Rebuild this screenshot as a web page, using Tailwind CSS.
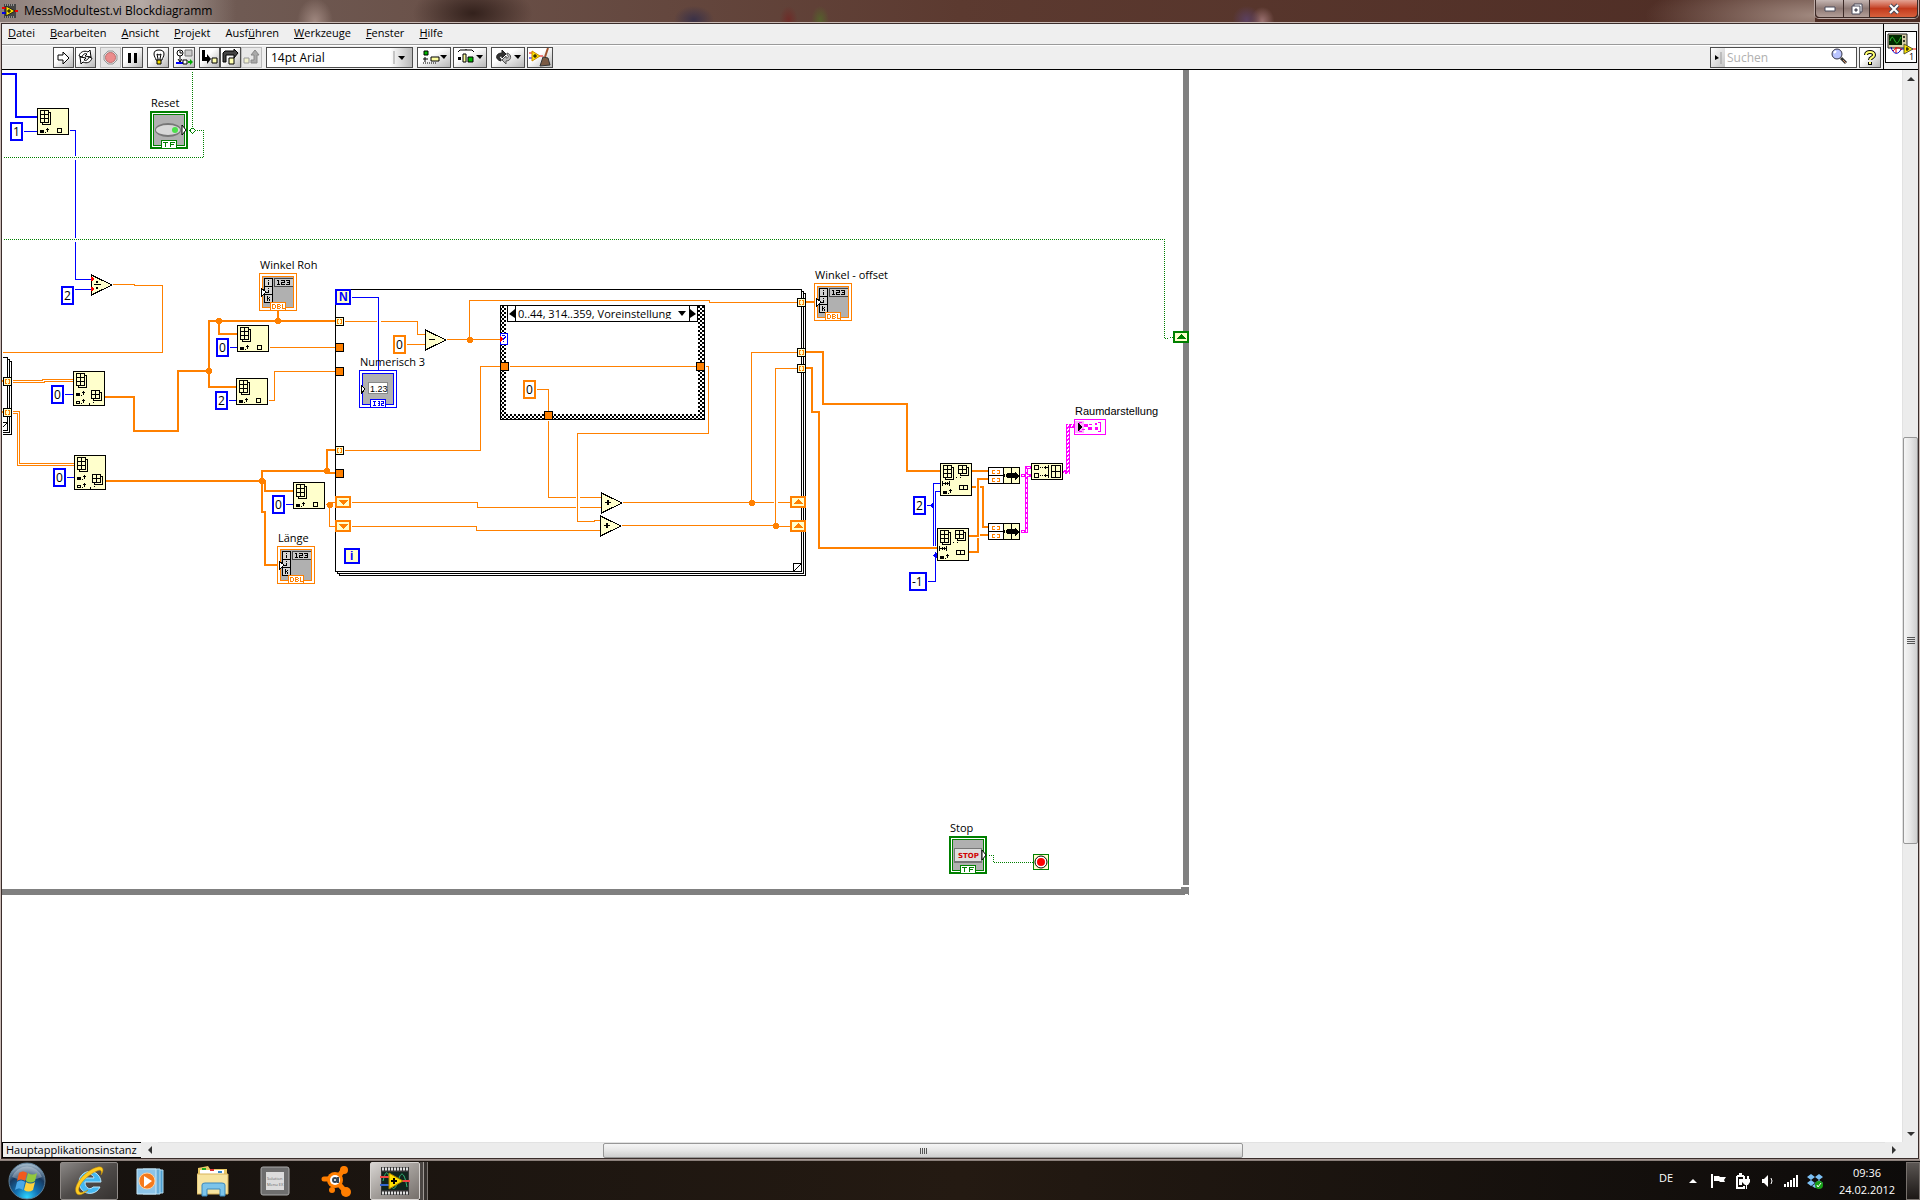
<!DOCTYPE html>
<html lang="de">
<head>
  <meta charset="UTF-8">
  <meta name="viewport" content="width=device-width, initial-scale=1.0">
  <title>MessModultest.vi Blockdiagramm</title>
  <script src="https://cdn.jsdelivr.net/npm/@tailwindcss/browser@4"></script>
</head>
<body class="h-screen flex flex-col overflow-hidden bg-black text-black text-[11px] font-['Open_Sans','Noto_Sans',sans-serif]">

  <!-- Fenster -->
  <div class="flex-1 min-h-0 flex flex-col bg-[#c9bab5]">
    <header class="h-[22px] shrink-0 flex items-start justify-between bg-linear-to-r from-[#75655f] via-[#5c3a30] to-[#4c2b23]">
      <div class="h-full flex items-center gap-1.5 pl-0.5 pr-6 bg-linear-to-r from-[#8d7f7a] via-[#b5aaa5] via-60% to-[#b5aaa5]/0">
        <svg class="w-4 h-4" viewBox="0 0 16 16">
          <path d="M2 1h12v14H2z" fill="#444"/>
          <path d="M3 2h10M3 14h10" stroke="#ddd" stroke-dasharray="1 1"/>
          <path d="M0 5h4" stroke="#e00" stroke-width="2"/><path d="M0 10h4" stroke="#00e" stroke-width="2"/><path d="M12 8h4" stroke="#e00" stroke-width="2"/>
          <path d="M4 3l9 5-9 5z" fill="#ffe600" stroke="#222"/>
          <path d="M5 8h4M7 6v4" stroke="#000"/>
        </svg>
        <h1 class="text-xs">MessModultest.vi Blockdiagramm</h1>
      </div>
      <div class="self-stretch flex-1 bg-[radial-gradient(ellipse_18px_24px_at_5%_100%,#a08880,transparent),radial-gradient(ellipse_60px_30px_at_15%_60%,#33211c,transparent),radial-gradient(ellipse_20px_14px_at_29%_90%,#3a3148,transparent),radial-gradient(ellipse_9px_14px_at_35%_90%,#6e2c28,transparent),radial-gradient(ellipse_9px_14px_at_37%_90%,#55602c,transparent),radial-gradient(ellipse_14px_14px_at_64%_90%,#5b4060,transparent),radial-gradient(ellipse_12px_14px_at_65%_95%,#9a7070,transparent),radial-gradient(ellipse_170px_40px_at_100%_70%,#a1897f,transparent)]"></div>
      <div class="h-[18px] mr-0.5 flex rounded-b border border-t-0 border-[#3c2a27] shadow-[0_0_0_1px_#bca9a4]">
        <button aria-label="Minimieren" class="w-[28px] flex items-center justify-center bg-linear-to-b from-[#c5b6b2] via-[#8e7974] via-50% to-[#b39f99] border-r border-[#3c2a27] rounded-bl">
          <svg class="w-3 h-3" viewBox="0 0 12 12"><path d="M1 4h10v4H1z" fill="#fff" stroke="#4a4a5a"/></svg>
        </button>
        <button aria-label="Verkleinern" class="w-[26px] flex items-center justify-center bg-linear-to-b from-[#c5b6b2] via-[#8e7974] via-50% to-[#b39f99] border-r border-[#3c2a27]">
          <svg class="w-3 h-3" viewBox="0 0 12 12"><path d="M3 1h8v8H3z" fill="#fff" stroke="#4a4a5a"/><path d="M1 3h8v8H1z" fill="#fff" stroke="#4a4a5a"/><path d="M4 6h2v2H4z" fill="#777" stroke="#4a4a5a"/></svg>
        </button>
        <button aria-label="Schließen" class="w-[47px] flex items-center justify-center bg-linear-to-b from-[#e3a394] via-[#c23a1c] via-50% to-[#d8603c] rounded-br">
          <svg class="w-3 h-3" viewBox="0 0 12 12"><path d="M2 2l8 8M10 2l-8 8" stroke="#4a4a5a" stroke-width="4"/><path d="M2 2l8 8M10 2l-8 8" stroke="#fff" stroke-width="2"/></svg>
        </button>
      </div>
    </header>

    <div class="flex-1 min-h-0 mx-px mt-px flex flex-col border border-[#3a2d2b] bg-[#efefef]">
      <div class="shrink-0 flex border-b border-black">
        <div class="flex-1 min-w-0">
          <nav class="h-[21px] flex items-center pl-1.5 pb-0.5 border-b border-[#9a9a9a]">
            <ul class="flex gap-[15px]">
              <li><a href="#"><u>D</u>atei</a></li>
              <li><a href="#"><u>B</u>earbeiten</a></li>
              <li><a href="#"><u>A</u>nsicht</a></li>
              <li><a href="#"><u>P</u>rojekt</a></li>
              <li><a href="#">Ausf<u>ü</u>hren</a></li>
              <li><a href="#"><u>W</u>erkzeuge</a></li>
              <li><a href="#"><u>F</u>enster</a></li>
              <li><a href="#"><u>H</u>ilfe</a></li>
            </ul>
          </nav>
          <div class="h-6 flex items-center gap-1 pl-[51px] pr-0.5 border-t border-white">
            <div class="flex gap-px">
              <button aria-label="Ausführen" class="w-[21px] h-[21px] flex items-center justify-center border border-[#4d4d4d] bg-linear-to-br from-white from-40% to-[#b8b8b8]">
                <svg class="w-[15px] h-[15px]" viewBox="0 0 15 15"><path d="M2 5h5V2l6 6-6 6v-4H2z" fill="#fff" stroke="#000"/></svg>
              </button>
              <button aria-label="Wiederholt ausführen" class="w-[21px] h-[21px] flex items-center justify-center border border-[#4d4d4d] bg-linear-to-br from-white from-40% to-[#b8b8b8]">
                <svg class="w-[17px] h-[17px]" viewBox="0 0 17 17" fill="#fff" stroke="#000"><path d="M2 7c1-4 5-6 9-4l2-2 1 7-6-1 2-2c-2-1-4 0-5 3z"/><path d="M15 9c-1 4-5 6-9 4l-2 2-1-7 6 1-2 2c2 1 4 0 5-3z"/></svg>
              </button>
            </div>
            <div class="flex gap-px">
              <button aria-label="Abbrechen" disabled class="w-[21px] h-[21px] flex items-center justify-center border border-[#bcbcbc] bg-[#e6e6e6]">
                <svg class="w-[15px] h-[15px]" viewBox="0 0 15 15"><path d="M5 1h5l4 4v5l-4 4H5l-4-4V5z" fill="#ddd" stroke="#999"/><circle cx="7.500" cy="7.500" r="5" fill="#ec8b8b" stroke="#c07070"/></svg>
              </button>
              <button aria-label="Pause" class="w-[21px] h-[21px] flex items-center justify-center border border-[#4d4d4d] bg-linear-to-br from-white from-40% to-[#b8b8b8]">
                <svg class="w-[15px] h-[15px]" viewBox="0 0 15 15"><path d="M3 3h3v10H3zM9 3h3v10H9z"/></svg>
              </button>
            </div>
            <button aria-label="Highlight-Funktion" class="w-[22px] h-[21px] flex items-center justify-center border border-[#4d4d4d] bg-linear-to-br from-white from-40% to-[#b8b8b8]">
              <svg class="w-[15px] h-[17px]" viewBox="0 0 15 17"><path d="M5 11C5 9 3 8 3 5s2-4 5-4 5 1 5 4-2 4-2 6z" fill="#fff" stroke="#000"/><path d="M6 5l1 5M10 5l-1 5M6 5l2 1 2-1" fill="none" stroke="#000"/><path d="M6 11h4v4H6z" fill="#f5e000" stroke="#000"/></svg>
            </button>
            <button aria-label="Verbindungswerte speichern" class="w-[22px] h-[21px] flex items-center justify-center border border-[#4d4d4d] bg-linear-to-br from-white from-40% to-[#b8b8b8]">
              <svg class="w-[17px] h-[17px]" viewBox="0 0 17 17"><circle cx="4" cy="4" r="3" fill="#fff" stroke="#000"/><path d="M4 2v2h2M4 7v7M2 10l2 3 2-3" fill="none" stroke="#000"/><path d="M9 1h7v6H9z" fill="#ccc" stroke="#777"/><path d="M0 14h7" stroke="#00f" stroke-width="2"/><path d="M7 11h4v4H7z" fill="#fff" stroke="#000"/><path d="M12 13h3" stroke="#0a0" stroke-width="2"/><path d="M14 10l3 3-3 3z" fill="#0a0"/></svg>
            </button>
            <div class="flex">
              <button aria-label="Hineinspringen" class="w-[21px] h-[21px] flex items-center justify-center border border-[#4d4d4d] bg-linear-to-br from-white from-40% to-[#b8b8b8]">
                <svg class="w-[17px] h-[17px]" viewBox="0 0 17 17"><path d="M1 1h3v7h2V5l4 5-4 5v-3H1z"/><path d="M11 9h5v5h-5z" fill="#ffffb0" stroke="#000"/></svg>
              </button>
              <button aria-label="Überspringen" class="w-[21px] h-[21px] flex items-center justify-center border border-[#4d4d4d] bg-linear-to-br from-white from-40% to-[#b8b8b8]">
                <svg class="w-[17px] h-[17px]" viewBox="0 0 17 17"><path d="M1 13V4l2-2h9V0l4 4-4 5V6H4v7z" fill="#444" stroke="#000"/><path d="M7 9h5v6H7z" fill="#ffffb0" stroke="#000"/></svg>
              </button>
              <button aria-label="Herausspringen" disabled class="w-[21px] h-[21px] flex items-center justify-center border border-[#bcbcbc] bg-[#e9e9e9]">
                <svg class="w-[17px] h-[17px]" viewBox="0 0 17 17"><path d="M8 14h6V6h2l-4-5-4 5h3v5H8z" fill="#aaa" stroke="#888"/><path d="M1 9h5v5H1z" fill="#f3f3cf" stroke="#999"/></svg>
              </button>
            </div>
            <div class="relative w-[147px] h-[21px]">
              <select aria-label="Schriftart" class="appearance-none w-full h-full pl-1 text-xs border border-[#4d4d4d] bg-linear-to-r from-white from-85% to-[#b8b8b8]">
                <option>14pt Arial</option>
              </select>
              <svg class="absolute right-0 top-0 w-5 h-[21px] pointer-events-none" viewBox="0 0 20 21"><path d="M1 4v13" stroke="#999"/><path d="M5 9h7l-3 4z"/></svg>
            </div>
            <div class="flex gap-0.5">
              <button aria-label="Objekte ausrichten" class="w-[34px] h-[21px] flex items-center justify-center border border-[#4d4d4d] bg-linear-to-br from-white from-40% to-[#b8b8b8]">
                <svg class="w-[28px] h-[17px]" viewBox="0 0 28 17"><path d="M4 2h4v4H4z" fill="#0b0" stroke="#000"/><path d="M5 8v5M3 10h5" stroke="#000"/><path d="M3 14h14" stroke="#000" stroke-dasharray="1 1"/><path d="M11 8h8v4h-8z" fill="#ffffa0" stroke="#000"/><path d="M20 6h7l-3 4z"/></svg>
              </button>
              <button aria-label="Objekte verteilen" class="w-[34px] h-[21px] flex items-center justify-center border border-[#4d4d4d] bg-linear-to-br from-white from-40% to-[#b8b8b8]">
                <svg class="w-[28px] h-[17px]" viewBox="0 0 28 17"><path d="M2 3l2-2h12l2 2M10 1V0" fill="none" stroke="#000"/><path d="M2 8h3v3H2z"/><path d="M7 5h3v8H7z" fill="#ffffa0" stroke="#000"/><path d="M12 8h5v5h-5z" fill="#0b0" stroke="#000"/><path d="M20 6h7l-3 4z"/></svg>
              </button>
            </div>
            <div class="flex gap-0.5">
              <button aria-label="Neu anordnen" class="w-[34px] h-[21px] flex items-center justify-center border border-[#4d4d4d] bg-linear-to-br from-white from-40% to-[#b8b8b8]">
                <svg class="w-[28px] h-[17px]" viewBox="0 0 28 17"><path d="M7 12c-6-1-6-8 1-8V1l4 4-4 4V7c-3 0-3 2-1 3z" fill="#333" stroke="#222"/><path d="M13 4c5 1 5 8-1 8v3l-4-4 4-4v2c3 0 3-2 1-3z" fill="#bbb" stroke="#555"/><path d="M20 6h7l-3 4z"/></svg>
              </button>
              <button aria-label="Diagramm aufräumen" class="w-[26px] h-[21px] flex items-center justify-center border border-[#4d4d4d] bg-linear-to-br from-white from-40% to-[#b8b8b8]">
                <svg class="w-[22px] h-[19px]" viewBox="0 0 22 19"><path d="M0 5h4" stroke="#e00"/><path d="M0 10h4" stroke="#00e"/><path d="M11 8h3" stroke="#e00"/><path d="M3 3l8 5-8 5z" fill="#ffe600" stroke="#c80"/><path d="M4 8h4M6 6v4" stroke="#000"/><path d="M19 0l-3 9" stroke="#a0522d" stroke-width="2"/><path d="M14 9l5 1 2 7-10 1z" fill="#7a5a44" stroke="#333"/></svg>
              </button>
            </div>
            <div class="flex-1"></div>
            <div class="flex gap-0.5">
              <div class="w-[147px] h-[21px] flex border border-[#4d4d4d] bg-white">
                <button aria-label="Suchbereich" class="w-[14px] bg-linear-to-br from-white to-[#c4c4c4]">
                  <svg class="w-[14px] h-[19px]" viewBox="0 0 14 19"><path d="M4 7v5l4-2z"/><path d="M10 4v12" stroke="#999"/></svg>
                </button>
                <input type="text" aria-label="Suchen" placeholder="Suchen" class="flex-1 min-w-0 pl-0.5 text-xs placeholder:text-[#b0b0b0]">
                <svg class="w-[17px] h-[17px] mr-2" viewBox="0 0 17 17"><path d="M10 10l5 5" stroke="#333" stroke-width="3"/><path d="M12 12l3 3" stroke="#d9956a"/><circle cx="6" cy="6" r="5" fill="#b9c4ff" stroke="#334"/><path d="M3 5l2-2" stroke="#fff" stroke-width="2"/></svg>
              </div>
              <button aria-label="Kontexthilfe" class="w-[22px] h-[21px] flex items-center justify-center border border-[#4d4d4d] bg-linear-to-br from-white from-40% to-[#b8b8b8]">
                <svg class="w-[12px] h-[16px]" viewBox="0 0 12 16"><path d="M2 5c0-4 8-4 8 0 0 3-4 2-4 5M6 12v3" fill="none" stroke="#000" stroke-width="4"/><path d="M2 5c0-4 8-4 8 0 0 3-4 2-4 5M6 12v2" fill="none" stroke="#ffff70" stroke-width="2"/></svg>
              </button>
            </div>
          </div>
        </div>
        <div class="w-[35px] flex items-center justify-center border-l border-black">
          <svg class="w-8 h-8" viewBox="0 0 32 32">
            <path d="M0 0h32v32H0z"/><path d="M1 1h30v30H1z" fill="#fff"/>
            <path d="M3 3h19v14H3z" fill="#d6cfa8" stroke="#222"/>
            <path d="M4 4h13v10H4z" fill="#002a00"/><path d="M5 10c2-6 3-4 5 0s3 2 6-4" fill="none" stroke="#3c3"/>
            <circle cx="19" cy="6" r="1"/><circle cx="19" cy="10" r="1"/>
            <path d="M6 16c2 8 8 8 10 2h4" fill="none" stroke="#00c"/><path d="M8 20c3-4 6-4 9-1M11 16v6M27 18h4" fill="none" stroke="#e00"/>
            <path d="M19 13l9 5-9 5z" fill="#ffe600" stroke="#553"/><path d="M21 18h3M22 16v4" stroke="#000"/>
            <text x="24" y="29" font-size="9">1</text>
          </svg>
        </div>
      </div>

      <!-- Blockdiagramm -->
      <div class="flex-1 min-h-0 flex">
        <main class="relative flex-1 min-w-0 overflow-hidden bg-white">
          <svg class="block" width="1900" height="1072" viewBox="2 70 1900 1072" shape-rendering="crispEdges" fill="none">
            <defs>
              <pattern id="checker" width="4" height="4" patternUnits="userSpaceOnUse"><path d="M0 0h4v4H0z" fill="#fff"/><path d="M0 0h2v2H0zM2 2h2v2H2z" fill="#000"/></pattern>
              <pattern id="cluster" x="2" width="4" height="4" patternUnits="userSpaceOnUse"><path d="M0 0h4v4H0z" fill="#ff00ff"/><path d="M1 1h1v2H1zM2 0h1v2H2z" fill="#fff"/></pattern>
              <symbol id="grid" width="12" height="16" viewBox="0 0 12 16">
                <path d="M2 2h9v13H2z" fill="#000"/><path d="M3 3h7v11H3z" fill="#ffffcc"/><path d="M0 0h9v13H0z" fill="#000"/>
                <path d="M1 1h3v3H1zM5 1h3v3H5zM1 5h3v3H1zM5 5h3v3H5zM1 9h3v3H1zM5 9h3v3H5z" fill="#ffffcc"/>
              </symbol>
              <symbol id="grid2" width="12" height="12" viewBox="0 0 12 12">
                <path d="M2 2h9v9H2z" fill="#000"/><path d="M3 3h7v7H3z" fill="#ffffcc"/><path d="M0 0h9v9H0z" fill="#000"/>
                <path d="M1 1h3v3H1zM5 1h3v3H5zM1 5h3v3H1zM5 5h3v3H5z" fill="#ffffcc"/>
              </symbol>
              <symbol id="idx" width="9" height="5" viewBox="0 0 9 5"><path d="M0 2h4v3H0zM5 4h1v1H5zM7 0h1v4H7zM6 1h3v1H6z" fill="#000"/></symbol>
              <symbol id="index" width="32" height="27" viewBox="0 0 32 27">
                <path d="M0 0h32v27H0z" fill="#000"/><path d="M1 1h30v25H1z" fill="#ffffcc"/>
                <use href="#grid" x="3" y="2"/><use href="#idx" x="3" y="20"/>
                <path d="M20 20h5v5h-5z" fill="#000"/><path d="M21 21h3v3h-3z" fill="#ffffcc"/>
              </symbol>
              <symbol id="subset" width="32" height="35" viewBox="0 0 32 35">
                <path d="M0 0h32v35H0z" fill="#000"/><path d="M1 1h30v33H1z" fill="#ffffcc"/>
                <use href="#grid" x="3" y="2"/><use href="#grid2" x="18" y="19"/><use href="#idx" x="3" y="20"/><use href="#idx" x="3" y="28"/>
                <path d="M4 31h2v1H4z" fill="#ffffcc"/><path d="M16 32h1v2h-1zM20 31h1v1h-1z" fill="#000"/>
              </symbol>
              <symbol id="split" width="32" height="33" viewBox="0 0 32 33">
                <path d="M0 0h32v33H0z" fill="#000"/><path d="M1 1h30v31H1z" fill="#ffffcc"/>
                <use href="#grid" x="3" y="2"/><use href="#grid2" x="18" y="2"/><use href="#idx" x="3" y="26"/>
                <path d="M2 18h1v5H2zM9 18h1v5H9zM3 20h6v1H3zM5 19h1v3H5zM7 19h1v3H7zM16 14h1v1h-1zM20 14h1v1h-1zM19 22h9v5h-9z" fill="#000"/><path d="M20 23h3v3h-3zM24 23h3v3h-3z" fill="#ffffcc"/>
              </symbol>
              <symbol id="bundle" width="32" height="17" viewBox="0 0 32 17">
                <path d="M0 0h32v17H0z" fill="#000"/><path d="M1 1h14v7H1zM1 9h14v7H1z" fill="#fff"/><path d="M16 1h7v15h-7zM24 1h7v15h-7z" fill="#ffffcc"/>
                <path d="M4 3h3v1H5v2h2v1H4zM9 3h3v4H9V6h2V4H9zM4 11h3v1H5v2h2v1H4zM9 11h3v4H9v-1h2v-2H9z" fill="#ff8000"/>
                <path d="M15 7h2v3h-2zM18 7l2-1h7V5l4 4-4 4v-2h-7l-2-1z" fill="#000"/>
              </symbol>
              <symbol id="auto" width="9" height="9" viewBox="0 0 9 9">
                <path d="M0 0h9v9H0z" fill="#000"/><path d="M1 1h7v7H1z" fill="#ffffcc"/><path d="M2 2h2v1H3v3h1v1H2zM5 2h2v5H5V6h1V3H5z" fill="#ff8000"/>
              </symbol>
              <symbol id="tunnel" width="9" height="9" viewBox="0 0 9 9"><path d="M0 0h9v9H0z" fill="#000"/><path d="M1 1h7v7H1z" fill="#ff8000"/></symbol>
              <symbol id="regDown" width="16" height="12" viewBox="0 0 16 12"><path d="M0 0h16v12H0z" fill="#ff8000"/><path d="M2 2h12v8H2z" fill="#ffffcc"/><path d="M3 4h10L8 9z" fill="#ff8000"/></symbol>
              <symbol id="regUp" width="16" height="12" viewBox="0 0 16 12"><path d="M0 0h16v12H0z" fill="#ff8000"/><path d="M2 2h12v8H2z" fill="#ffffcc"/><path d="M3 8h10L8 3z" fill="#ff8000"/></symbol>
              <symbol id="tri" width="22" height="22" viewBox="0 0 22 22"><path d="M0 0l22 11L0 22z" fill="#000"/><path d="M1 2l19 9L1 20z" fill="#ffffcc"/></symbol>
              <symbol id="constI" width="13" height="19" viewBox="0 0 13 19"><path d="M0 0h13v19H0z" fill="#0000ff"/><path d="M2 2h9v15H2z" fill="#fff"/></symbol>
              <symbol id="constD" width="13" height="19" viewBox="0 0 13 19"><path d="M0 0h13v19H0z" fill="#ff8000"/><path d="M2 2h9v15H2z" fill="#fff"/></symbol>
              <symbol id="dot" width="6" height="6" viewBox="0 0 6 6"><path d="M1 0h4v1h1v4H5v1H1V5H0V1h1z" fill="#ff8000"/></symbol>
              <symbol id="arrayTerm" width="38" height="38" viewBox="0 0 38 38">
                <path d="M0 0h38v38H0z" fill="#ff8000"/><path d="M1 1h36v36H1z" fill="#fff"/><path d="M3 3h32v32H3z" fill="#ff8000"/><path d="M4 4h30v30H4z" fill="#b0b0b0"/>
                <path d="M5 5h9v25H5z" fill="#000"/><path d="M6 6h7v7H6zM6 14h7v7H6zM6 22h7v7H6z" fill="#d4d4d4"/>
                <path d="M15 5h19v9H15z" fill="#444"/><path d="M16 6h18v7H16z" fill="#c8c8c8"/>
                <path d="M9 7h1v1H9zM9 9h1v3H9zM9 15h1v1H9zM9 17h1v3H7v-1h2zM8 23h1v5H8zM9 25h1v1H9zM10 24h1v1h-1zM10 26h1v2h-1z" fill="#000"/>
                <path d="M18 7h2v4h1v1h-3v-1h1V8h-1zM22 7h4v3h-3v1h3v1h-4V9h3V8h-3zM27 7h4v5h-4v-1h3v-1h-2V9h2V8h-3z" fill="#000"/>
                <path d="M2 15l5 4-5 5z" fill="#fff" stroke="#000"/>
                <path d="M11 29h16v9H11z" fill="#ff8000"/><path d="M12 30h14v7H12z" fill="#fff"/>
                <path d="M13 31h3v1h1v3h-1v1h-3zM14 32v3h2v-3zM18 31h3v1h1v1h-1v1h1v1h-1v1h-3zM19 32v1h2v-1zM19 34v1h2v-1zM23 31h1v4h2v1h-3z" fill="#ff8000" fill-rule="evenodd"/>
              </symbol>
              <symbol id="boolTerm" width="38" height="38" viewBox="0 0 38 38">
                <path d="M0 0h38v38H0z" fill="#008000"/><path d="M2 2h34v34H2z" fill="#fff"/><path d="M3 3h32v32H3z" fill="#008000"/><path d="M4 4h30v30H4z" fill="#b0b0b0"/>
                <path d="M11 29h16v9H11z" fill="#008000"/><path d="M12 30h14v7H12z" fill="#fff"/>
                <path d="M13 31h5v1h-2v4h-1v-4h-2zM20 31h5v1h-4v1h3v1h-3v2h-1z" fill="#008000"/>
              </symbol>
            </defs>

            <!-- While-Schleife -->
            <path d="M1186 70V885M2 892H1189" stroke="#808080" stroke-width="6"/>
            <path d="M1181 887h8v2h-8z" fill="#808080"/><path d="M1185 894h3v1h-3z" fill="#fff"/>

            <!-- boolesche Leitungen -->
            <g stroke="#008000" stroke-dasharray="1 1" stroke-dashoffset=".5" transform="translate(.5 .5)">
              <path d="M192 70V130M187 130H203V157H2M2 239H1164V338H1168M1168 337H1173M987 855H993V862H1033"/>
            </g>

            <!-- For-Schleifen -->
            <g stroke="#000" transform="translate(.5 .5)">
              <path d="M335 289H801V571H335zM803 291V573H337M805 293V575H339M337 571V573M339 573V575M801 291H803M803 293H805"/>
              <path d="M793 571V563H801L793 571"/>
              <path d="M2 357H7V430H2M7 359H9V432H2M9 361H11V434H2M2 427L7 422H2"/>
            </g>

            <!-- Case-Struktur -->
            <path d="M500 305h205v115H500z" fill="#000"/><path d="M501 306h203v113H501z" fill="url(#checker)"/><path d="M506 306h192v108H506z" fill="#fff"/>

            <!-- Skalar-Leitungen -->
            <g stroke="#ff8000" transform="translate(.5 .5)">
              <path d="M112 284H134V285H162V352H2"/>
              <path d="M12 380H42V379H73M12 382H44V381H73M12 411H19V463H74M12 413H17V465H74"/>
              <path d="M269 347H335M268 400H274V371H335M325 504H329V502H336M329 504V526H336"/>
              <path d="M344 321H376M380 321H417V334H425M406 344H425M446 339H500M469 339V300H709V302H797"/>
              <path d="M344 450H480V366H500M509 366H696M705 366H708V433H577V521H594V520H600"/>
              <path d="M536 389H548V411M548 420V497H575M579 497H601M351 502H477V507H575M579 507H601M351 526H476V530H600"/>
              <path d="M622 502H773M777 502H790M621 525H775V526H790M751 502V352H797M775 525V368H797"/>
            </g>
            <g stroke="#0000ff" transform="translate(.5 .5)">
              <path d="M69 130H75V155M75 159V237M75 241V279H91M23 131H37M74 289H91M64 394H73M66 477H74M229 347H237M228 400H236M285 504H293"/>
              <path d="M351 297H378V370"/>
              <path d="M926 505H933M940 483H933V545M940 491H935V545M935 551V581H927"/>
            </g>
            <path d="M2 74H16V117H37" stroke="#0000ff" stroke-width="2"/>
            <path d="M930 505l2-2h2v5h-2zM933 555l2-2h3v5h-3z" fill="#0000ff"/>

            <!-- Array-Leitungen -->
            <g stroke="#ff8000" stroke-width="2">
              <path d="M105 397H134V431H178V371H209M335 321H209V387H236M219 321V334H237M278 321V311"/>
              <path d="M106 481H262M335 450H327V471H262V512H265V565H277M262 481H265V491H293M327 471V473H335"/>
              <path d="M806 302H814M806 352H823V404H907V471H940M806 368H812V412H819V548H937"/>
              <path d="M972 471H988M972 487H976M980 487H983V527H988M969 536H978V479H988M969 552H978V538M980 535H988"/>
              <path d="M2 381h1M2 412h1"/>
            </g>
            <use href="#dot" x="216" y="318"/><use href="#dot" x="275" y="318"/><use href="#dot" x="206" y="368"/><use href="#dot" x="259" y="478"/><use href="#dot" x="324" y="468"/>
            <use href="#dot" x="327" y="502"/><use href="#dot" x="467" y="337"/><use href="#dot" x="749" y="500"/><use href="#dot" x="773" y="523"/>

            <!-- Cluster-Leitungen -->
            <g transform="translate(.5 .5)">
              <path d="M1020 475H1031M1020 531H1026V467H1031" stroke="#ff00ff" stroke-width="3"/>
              <path d="M1021 475H1031M1021 531H1026V467H1031" stroke="#fff" stroke-dasharray="3 2" stroke-dashoffset=".5"/>
            </g>
            <path d="M1063 470H1066V424H1074V428H1070V474H1063z" fill="url(#cluster)"/>

            <!-- Knoten -->
            <use href="#index" x="37" y="108"/><use href="#index" x="237" y="325"/><use href="#index" x="236" y="378"/><use href="#index" x="293" y="482"/>
            <use href="#subset" x="73" y="371"/><use href="#subset" x="74" y="455"/>
            <use href="#split" x="940" y="463"/><use href="#split" x="937" y="528"/>
            <use href="#bundle" x="988" y="467"/><use href="#bundle" x="988" y="523"/>
            <path d="M1031 463h32v17h-32z" fill="#000"/><path d="M1032 464h30v15h-30z" fill="#ffffcc"/>
            <path d="M1034 465h5v5h-5zM1034 473h5v5h-5zM1048 465h1v13h-1zM1051 465h10v13h-10zM1040 467h1v1h-1zM1042 467h1v1h-1zM1044 467h4v1h-4zM1045 466h1v3h-1zM1040 475h1v1h-1zM1042 475h1v1h-1zM1044 475h4v1h-4zM1045 474h1v3h-1z" fill="#000"/>
            <path d="M1035 466h3v3h-3zM1035 474h3v3h-3zM1052 466h3v5h-3zM1056 466h4v5h-4zM1052 472h3v5h-3zM1056 472h4v5h-4z" fill="#ffffcc"/>
            <use href="#tri" x="91" y="274"/><use href="#tri" x="425" y="329"/><use href="#tri" x="601" y="492"/><use href="#tri" x="600" y="515"/>
            <path d="M94 284h7v1h-7zM96 281h2v2h-2zM96 287h2v2h-2zM429 339h6v1h-6zM605 502h6v1h-6zM607 500h2v5h-2zM604 525h6v1h-6zM606 523h2v5h-2z" fill="#000"/>
            <path d="M91 277h2v4h-2zM93 278h1v2h-1zM91 287h2v4h-2zM93 288h1v2h-1z" fill="#ff0000"/>

            <!-- Tunnel und Schieberegister -->
            <use href="#auto" x="3" y="377"/><use href="#auto" x="3" y="408"/><use href="#auto" x="335" y="317"/><use href="#auto" x="335" y="446"/>
            <use href="#auto" x="797" y="298"/><use href="#auto" x="797" y="348"/><use href="#auto" x="797" y="364"/>
            <use href="#tunnel" x="335" y="343"/><use href="#tunnel" x="335" y="367"/><use href="#tunnel" x="335" y="469"/>
            <use href="#tunnel" x="500" y="362"/><use href="#tunnel" x="696" y="362"/><use href="#tunnel" x="544" y="411"/>
            <use href="#regDown" x="335" y="496"/><use href="#regDown" x="335" y="520"/><use href="#regUp" x="790" y="496"/><use href="#regUp" x="790" y="520"/>
            <path d="M1173 331h16v12h-16z" fill="#008000"/><path d="M1175 333h12v8h-12z" fill="#ffffcc"/><path d="M1176 339h10l-5-5z" fill="#008000"/>
            <path d="M500 333h8v12h-8z" fill="#0000ff"/><path d="M501 334h6v10h-6z" fill="#fff"/><path d="M502 335h3v1h1v2h-1v1h-1v1h-1v-2h1v-1h1v-1h-3zM503 341h1v1h-1z" fill="#0000ff"/><path d="M500 336l4 3-4 3z" fill="#ff0000"/>
            <path d="M335 289h16v16h-16zM344 548h16v16h-16z" fill="#0000ff"/><path d="M337 291h12v12h-12zM346 550h12v12h-12z" fill="#ffffcc"/>
            <path d="M190 130l2-2h1l2 2v1l-2 2h-1l-2-2z" fill="#fff" stroke="#008000"/>

            <!-- Konstanten -->
            <use href="#constI" x="10" y="122"/><use href="#constI" x="61" y="286"/><use href="#constI" x="51" y="385"/><use href="#constI" x="53" y="468"/>
            <use href="#constI" x="216" y="338"/><use href="#constI" x="215" y="391"/><use href="#constI" x="272" y="495"/><use href="#constI" x="913" y="496"/>
            <path d="M909 572h18v19h-18z" fill="#0000ff"/><path d="M911 574h14v15h-14z" fill="#fff"/>
            <use href="#constD" x="393" y="335"/><use href="#constD" x="523" y="380"/>
            <g fill="#000" font-size="12">
              <text x="13" y="136">1</text><text x="64" y="300">2</text><text x="54" y="399">0</text><text x="56" y="482">0</text>
              <text x="219" y="352">0</text><text x="218" y="405">2</text><text x="275" y="509">0</text><text x="916" y="510">2</text><text x="912" y="586">-1</text>
              <text x="396" y="349">0</text><text x="526" y="394">0</text>
            </g>
            <g fill="#0000ff" font-size="12" font-weight="bold" font-family="Liberation Sans, sans-serif"><text x="339" y="301">N</text><text x="350" y="560">i</text></g>

            <!-- Anschlüsse -->
            <use href="#arrayTerm" x="259" y="273"/><use href="#arrayTerm" x="277" y="546"/><use href="#arrayTerm" x="814" y="283"/>
            <use href="#boolTerm" x="150" y="111"/><use href="#boolTerm" x="949" y="836"/>
            <g shape-rendering="auto">
              <ellipse cx="168" cy="130" rx="13" ry="7" fill="#777"/><ellipse cx="168" cy="130" rx="12" ry="5" fill="#d8d8d8"/><circle cx="175" cy="130" r="3" fill="#4be04b"/>
              <path d="M182 125l4 5-4 5z" fill="#fff" stroke="#000"/>
              <path d="M954 848h28v15h-28z" fill="#777"/><path d="M955 849h26v12h-26z" fill="#ddd"/>
              <text x="958" y="858" font-size="7" font-weight="bold" font-family="DejaVu Sans, sans-serif" fill="#d00000">STOP</text>
              <path d="M982 850l4 5-4 5z" fill="#fff" stroke="#000"/>
            </g>
            <path d="M359 370h38v38h-38z" fill="#0000ff"/><path d="M360 371h36v36h-36z" fill="#fff"/><path d="M362 373h32v32h-32z" fill="#0000ff"/><path d="M363 374h30v30h-30z" fill="#b0b0b0"/>
            <path d="M368 382h20v12h-20z" fill="#888"/><path d="M369 383h18v10h-18z" fill="#fff"/><text x="370" y="392" font-size="9" font-family="Liberation Sans, sans-serif" fill="#000">1.23</text>
            <path d="M361 385l4 4-4 5z" fill="#fff" stroke="#000"/>
            <path d="M370 399h16v9h-16z" fill="#0000ff"/><path d="M371 400h14v7h-14z" fill="#fff"/>
            <path d="M373 401h3v1h-1v3h1v1h-3v-1h1v-3h-1zM378 401h2v5h-2v-1h1v-1h-1v-1h1v-1h-1zM381 401h3v3h-2v1h2v1h-3v-3h2v-1h-2z" fill="#0000ff"/>
            <path d="M1074 419h32v16h-32z" fill="#ff00ff"/><path d="M1075 420h30v14h-30z" fill="#fff"/><path d="M1075 421h9v12h-9z" fill="#ffb0ff"/>
            <path d="M1078 423l4 4-4 4z" fill="#000"/>
            <path d="M1079 422h3v1h-2v1h-1zM1079 430h1v1h2v1h-3zM1084 424h4v3h-4zM1089 424h3v1h-3zM1095 423h2v2h-2zM1088 427h4v3h-4zM1095 427h3v3h-3zM1098 422h3v10h-3v-1h2v-8h-2zM1082 429h3v1h-3z" fill="#ff00ff"/>
            <path d="M1033 854h16v16h-16z" fill="#008000"/><path d="M1034 855h14v14h-14z" fill="#ffffcc"/>
            <circle cx="1041" cy="862" r="6" fill="#fff" stroke="#000" shape-rendering="auto"/><circle cx="1041" cy="862" r="4" fill="#ff0000" shape-rendering="auto"/>

            <g fill="#000" font-size="11">
              <text x="151" y="107">Reset</text><text x="260" y="269">Winkel Roh</text><text x="278" y="542">Länge</text>
              <text x="815" y="279">Winkel - offset</text><text x="360" y="366">Numerisch 3</text><text x="950" y="832">Stop</text>
              <text x="1075" y="415" font-family="Liberation Sans, sans-serif">Raumdarstellung</text>
            </g>
          </svg>

          <!-- Case-Selektor -->
          <div class="absolute left-[505px] top-[235px] w-[191px] h-[17px] flex border border-black bg-white">
            <button aria-label="Vorheriger Case" class="w-2 border-r border-black"><svg class="w-[7px] h-[15px]" viewBox="0 0 7 15"><path d="M7 3v9L1 8z"/></svg></button>
            <select aria-label="Case" class="appearance-none flex-1 min-w-0 pl-0.5 bg-white leading-none">
              <option>0..44, 314..359, Voreinstellung</option>
            </select>
            <svg class="absolute right-2 top-0 w-3 h-[15px] pointer-events-none" viewBox="0 0 12 15"><path d="M1 5h8L5 10z"/></svg>
            <button aria-label="Nächster Case" class="w-2 border-l border-black"><svg class="w-[7px] h-[15px]" viewBox="0 0 7 15"><path d="M0 3v9l6-4z"/></svg></button>
          </div>
        </main>

        <div class="w-4 shrink-0 flex flex-col bg-[#ececec] border-l border-[#e2e2e2]">
          <button aria-label="Nach oben" class="h-[17px] flex items-center justify-center"><svg class="w-2 h-2" viewBox="0 0 8 8"><path d="M0 6h8L4 2z" fill="#333"/></svg></button>
          <div class="flex-1 flex flex-col">
            <div class="basis-0 grow-[351]"></div>
            <div class="basis-0 grow-[405] flex flex-col items-center justify-center gap-px rounded-xs border border-[#979797] bg-linear-to-r from-[#f5f5f5] via-[#e6e6e6] via-50% to-[#cfcfcf]">
              <i class="w-2 h-px bg-[#555]"></i><i class="w-2 h-px bg-[#555]"></i><i class="w-2 h-px bg-[#555]"></i><i class="w-2 h-px bg-[#555]"></i>
            </div>
            <div class="basis-0 grow-[282]"></div>
          </div>
          <button aria-label="Nach unten" class="h-[17px] flex items-center justify-center"><svg class="w-2 h-2" viewBox="0 0 8 8"><path d="M0 2h8L4 6z" fill="#333"/></svg></button>
        </div>
      </div>

      <div class="h-4 shrink-0 flex bg-[#ececec]">
        <div class="w-[139px] pl-[3px] leading-[13px] border border-r-0 border-black bg-[#efefef] whitespace-nowrap">Hauptapplikationsinstanz</div>
        <button aria-label="Nach links" class="w-[17px] flex items-center justify-center"><svg class="w-2 h-2" viewBox="0 0 8 8"><path d="M6 0v8L2 4z" fill="#333"/></svg></button>
        <div class="flex-1 flex border-t border-[#e2e2e2]">
          <div class="basis-0 grow-[446]"></div>
          <div class="basis-0 grow-[639] flex items-center justify-center gap-px rounded-xs border border-[#979797] bg-linear-to-b from-[#f5f5f5] via-[#e6e6e6] via-50% to-[#cfcfcf]">
            <i class="w-px h-1.5 bg-[#555]"></i><i class="w-px h-1.5 bg-[#555]"></i><i class="w-px h-1.5 bg-[#555]"></i><i class="w-px h-1.5 bg-[#555]"></i>
          </div>
          <div class="basis-0 grow-[643]"></div>
        </div>
        <button aria-label="Nach rechts" class="w-[17px] flex items-center justify-center"><svg class="w-2 h-2" viewBox="0 0 8 8"><path d="M2 0v8l4-4z" fill="#333"/></svg></button>
        <div class="w-4"></div>
      </div>
    </div>
    <div class="h-px shrink-0 bg-[#a39591]"></div>
  </div>

  <!-- Taskleiste -->
  <footer class="h-10 shrink-0 flex items-center justify-between border-t border-[#8b807b] bg-linear-to-r from-[#15110e] via-[#241a12] to-[#0d0b0a]">
    <div class="h-full flex items-center">
      <button aria-label="Start" class="w-[60px] flex justify-center pr-1.5">
        <svg class="w-[38px] h-[38px]" viewBox="0 0 38 38">
          <defs>
            <radialGradient id="orb" cx=".5" cy=".95" r=".9"><stop offset="0" stop-color="#2fd6ff"/><stop offset=".35" stop-color="#1373b5"/><stop offset=".7" stop-color="#17395f"/><stop offset="1" stop-color="#9db4c6"/></radialGradient>
          </defs>
          <circle cx="19" cy="19" r="18" fill="url(#orb)" stroke="#5d7f99"/>
          <path d="M4 15a16 16 0 0 1 30 0c-9 4-21 4-30 0z" fill="#fff" opacity=".3"/>
          <path d="M11 11c3-2 5-2 8 0l-2 8c-3-2-5-2-8 0z" fill="#f25a1d"/><path d="M20 11c3 2 6 2 9 0l-2 8c-3 2-6 2-9 0z" fill="#93c83d"/>
          <path d="M9 20c3-2 5-2 8 0l-2 8c-3-2-5-2-8 0z" fill="#4aa8e8"/><path d="M18 20c3 2 6 2 9 0l-2 8c-3 2-6 2-9 0z" fill="#ffd23c"/>
        </svg>
      </button>
      <button aria-label="Internet Explorer" class="w-[58px] h-[38px] flex items-center justify-center rounded-xs border border-[#8f8a87] bg-linear-to-br from-[#8b8886] via-[#4f4b49] via-50% to-[#353230]">
        <svg class="w-8 h-8" viewBox="0 0 32 32">
          <path fill-rule="evenodd" d="M28 17A11 11 0 1 0 27 22h-7c-2 3-8 2-8-5zM12 13c1-5 8-5 9 0z" fill="#45b9f2" stroke="#b8e8ff"/>
          <path d="M4 29C-2 22 12 5 25 2c6-1 6 4 3 8 1-4 0-6-4-4C14 10 4 21 6 26c1 3 5 1 9-1-4 4-9 6-11 4z" fill="#ffcc22" stroke="#b98200" stroke-width=".5"/>
        </svg>
      </button>
      <button aria-label="Media Player" class="w-16 flex justify-center">
        <svg class="w-[28px] h-[28px]" viewBox="0 0 28 28"><path d="M13 3h14v23H13z" fill="#4f9fd0" stroke="#b5dcf0"/><path d="M7 2h17v25H7z" fill="#68add8" stroke="#b5dcf0"/><path d="M1 2h19v25H1z" fill="#8dc4e8" stroke="#c8e8f8"/><circle cx="11" cy="14" r="8" fill="#f57a1c" stroke="#ffd0a0"/><path d="M8 9l8 5-8 6z" fill="#fff"/></svg>
      </button>
      <button aria-label="Explorer" class="w-[62px] flex justify-center">
        <svg class="w-8 h-8" viewBox="0 0 32 32"><path d="M1 3l10-2 2 3h17v22H1z" fill="#e9c866"/><path d="M3 5h24v6H3z" fill="#fff"/><path d="M5 3h4v2H5z" fill="#2a2"/><path d="M13 4h4v2h-4z" fill="#d33"/><path d="M21 6h4v2h-4z" fill="#38c"/><path d="M0 9h31v20H0z" fill="#f7e4a0" stroke="#d8b45c"/><path d="M5 31V20q0-2 3-2h17q3 0 3 2v11h-5v-7H10v7z" fill="#7cc4ea" stroke="#3b88bd"/></svg>
      </button>
      <button aria-label="Solution Menu EX" class="w-[62px] flex justify-center">
        <svg class="w-[30px] h-[30px]" viewBox="0 0 30 30"><rect x="1" y="1" width="28" height="28" rx="2" fill="#6e6e6e" stroke="#aaa"/><path d="M6 6h18v18H6z" fill="#dcdcdc"/><text x="7" y="14" font-size="4" fill="#666">Solution</text><text x="7" y="20" font-size="4" fill="#666">Menu EX</text></svg>
      </button>
      <button aria-label="avast!" class="w-16 flex justify-center pr-1">
        <svg class="w-8 h-8" viewBox="0 0 32 32"><path d="M15 14L4 14M16 15l8-11M16 16l10 11" stroke="#ff7e00" stroke-width="5" stroke-linecap="round"/><circle cx="24" cy="5" r="4" fill="#ff7e00"/><circle cx="26" cy="27" r="5" fill="#ff7e00"/><circle cx="12" cy="25" r="3" fill="#ff7e00"/><circle cx="15" cy="15" r="8" fill="#ff7e00"/><circle cx="15" cy="15" r="5" fill="#fff"/><circle cx="15" cy="15" r="2" fill="none" stroke="#345" stroke-width="2"/><path d="M18 12v6" stroke="#345" stroke-width="2"/></svg>
      </button>
      <button aria-label="LabVIEW" class="w-[50px] h-[38px] flex items-center justify-center rounded-xs border border-[#d6d2cf] bg-linear-to-br from-[#d8d5d2] via-[#a29d99] via-50% to-[#76706b]">
        <svg class="w-[30px] h-[28px]" viewBox="0 0 30 28"><path d="M1 0h28v28H1z" fill="#333"/><path d="M2 2h26M2 26h26" stroke="#ddd" stroke-width="3" stroke-dasharray="2 1"/><path d="M2 5h26v18H2z" fill="#10241c"/><path d="M3 14c3-12 5-10 7 0s5 10 8 0 6-10 9 6" fill="none" stroke="#3b7"/><path d="M0 10h9M22 14h8" stroke="#e44" stroke-width="2"/><path d="M0 18h9" stroke="#36c" stroke-width="2"/><path d="M9 6l14 8-14 8z" fill="#ffdf00" stroke="#a87d00"/><path d="M11 14h6M14 11v6" stroke="#000" stroke-width="2"/></svg>
      </button>
      <div class="w-1 h-[38px] border-r border-[#a09a96] bg-[#4b4643]"></div><div class="w-1 h-[38px] border-r border-[#7c7672] bg-[#35302d]"></div>
    </div>
    <div class="h-full flex items-center text-white">
      <span class="pb-1">DE</span>
      <button aria-label="Ausgeblendete Symbole" class="ml-4"><svg class="w-2 h-2" viewBox="0 0 8 8"><path d="M0 6h8L4 2z" fill="#fff"/></svg></button>
      <svg class="w-4 h-4 ml-[14px]" viewBox="0 0 16 16"><path d="M1 1v14" stroke="#fff" stroke-width="2"/><path d="M3 3h5l1 1h6l-2 3 1 2H9L8 8H3z" fill="#fff"/></svg>
      <svg class="w-4 h-4 ml-2" viewBox="0 0 16 16"><path d="M2 3h7M4 1h3" stroke="#fff" stroke-width="2"/><path d="M2 3v12h7v-2M9 3v2" fill="none" stroke="#fff" stroke-width="2"/><path d="M4 6h3v6H4zM7 6h8v3l-2 3h-3L7 9zM8 3h2v3H8zM12 3h2v3h-2zM11 12h1v4h-1z" fill="#fff"/></svg>
      <svg class="w-4 h-4 ml-2" viewBox="0 0 16 16"><path d="M3 6h2l4-4v12l-4-4H3z" fill="#fff"/><path d="M12 5q2 3 0 6" fill="none" stroke="#fff"/></svg>
      <svg class="w-4 h-4 ml-2" viewBox="0 0 16 16"><path d="M1 11h2v3H1zM4 9h2v5H4zM7 7h2v7H7zM10 5h2v9h-2zM13 2h2v12h-2z" fill="#fff"/></svg>
      <svg class="w-4 h-4 ml-2" viewBox="0 0 16 16"><path d="M4 1l4 3-4 3-4-3zM12 1l4 3-4 3-4-3zM4 7l4 3-4 3-4-3zM12 7l4 3-4 3-4-3zM8 11l3 2-3 2-3-2z" fill="#7cc0f5"/><circle cx="12" cy="12" r="4" fill="#18a018"/><path d="M10 12l1 2 3-4" fill="none" stroke="#fff"/></svg>
      <div class="w-[78px] ml-[5px] text-center leading-[17px]"><div>09:36</div><div>24.02.2012</div></div>
      <button aria-label="Desktop anzeigen" class="w-[14px] h-[38px] border border-[#77716d] bg-linear-to-b from-[#5b5653] to-[#1c1816]"></button>
    </div>
  </footer>
</body>
</html>
